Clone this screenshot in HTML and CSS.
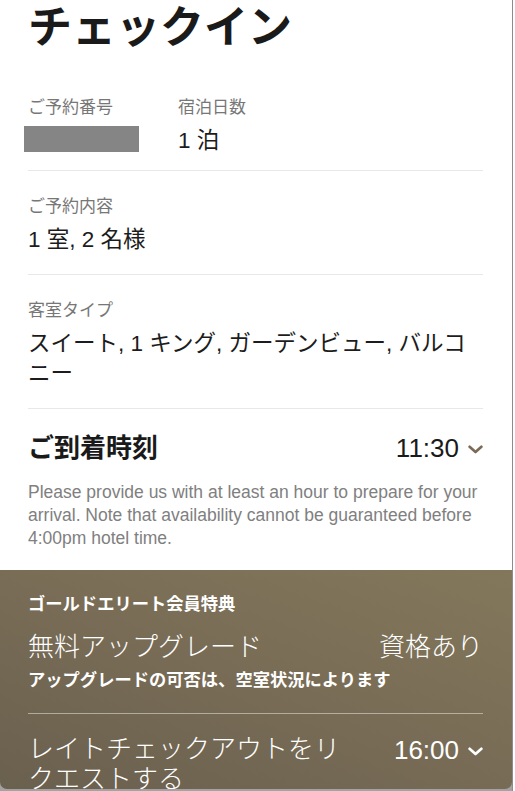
FILE: index.html
```html
<!DOCTYPE html>
<html lang="ja">
<head>
    <meta charset="UTF-8">
    <meta name="viewport" content="width=device-width, initial-scale=1.0">
    <title>チェックイン</title>
    <link rel="stylesheet" href="styles.css">
</head>
<body>

<div class="app">
    <div class="scroll-thumb"></div>

    <div class="sheet">
        <h1 class="page-title">チェックイン</h1>

        <section class="info first">
            <div class="info-col">
                <div class="label">ご予約番号</div>
                <div class="value"><span class="redacted"></span></div>
            </div>
            <div class="info-col">
                <div class="label">宿泊日数</div>
                <div class="value">1 泊</div>
            </div>
        </section>

        <section class="info">
            <div class="label">ご予約内容</div>
            <div class="value">1 室, 2 名様</div>
        </section>

        <section class="info">
            <div class="label">客室タイプ</div>
            <div class="value">スイート, 1 キング, ガーデンビュー, バルコニー</div>
        </section>

        <section class="arrival">
            <div class="arrival-row">
                <h2>ご到着時刻</h2>
                <button class="time-select">11:30
                    <svg width="15" height="9" viewBox="0 0 15 9"><path d="M1.6 1.8 L7.5 7 L13.4 1.8" fill="none" stroke="currentColor" stroke-width="2.7" stroke-linecap="round" stroke-linejoin="round"/></svg>
                </button>
            </div>
            <p class="note">Please provide us with at least an hour to prepare for your arrival. Note that availability cannot be guaranteed before 4:00pm hotel time.</p>
        </section>
    </div>

    <div class="elite">
        <div class="elite-title">ゴールドエリート会員特典</div>
        <div class="elite-row">
            <span>無料アップグレード</span>
            <span>資格あり</span>
        </div>
        <div class="elite-sub">アップグレードの可否は、空室状況によります</div>
        <div class="elite-divider"></div>
        <div class="elite-row late">
            <span class="late-label">レイトチェックアウトをリクエストする</span>
            <button class="time-select light">16:00
                <svg width="15" height="9" viewBox="0 0 15 9"><path d="M1.6 1.8 L7.5 7 L13.4 1.8" fill="none" stroke="currentColor" stroke-width="2.7" stroke-linecap="round" stroke-linejoin="round"/></svg>
            </button>
        </div>
    </div>
</div>

</body>
</html>
```

FILE: styles.css
```css
body {
    margin: 0;
    padding: 0;
    background: #fff;
    font-family: "Liberation Sans", "Noto Sans CJK JP", sans-serif;
    color: #1c1c1c;
}

.app {
    position: relative;
    width: 513px;
    height: 791px;
    overflow: hidden;
    background: #a3a3a3;
    border-right: 1px solid #8c8c8c;
    padding-bottom: 2px;
    box-sizing: border-box;
    display: flex;
    flex-direction: column;
}

/* scrollbar thumb on the right edge */
.scroll-thumb {
    position: absolute;
    top: 0;
    right: -1px;
    width: 1px;
    height: 148px;
    background: #1a1a1a;
}

.sheet {
    background: #fff;
    padding: 0 29px 20px 28px;
}

.page-title {
    margin: 0;
    padding-top: 2px;
    font-size: 44px;
    line-height: 52px;
    font-weight: bold;
    color: #1a1a1a;
}

.info {
    padding: 24px 0 19px;
    border-bottom: 1px solid #e8e8e8;
}

.info.first {
    display: flex;
    padding-top: 42px;
    padding-bottom: 14px;
}

.info-col:first-child {
    width: 150px;
}

.label {
    font-size: 17px;
    line-height: 24px;
    color: #777;
}

.value {
    margin-top: 6px;
    font-size: 22.5px;
    line-height: 30px;
    color: #1c1c1c;
}

.redacted {
    display: block;
    width: 115px;
    height: 26px;
    margin: 3px 0 0 -4px;
    background: #858585;
}

.arrival {
    padding-top: 22px;
}

.arrival-row {
    display: flex;
    justify-content: space-between;
    align-items: center;
}

.arrival-row h2 {
    margin: 0;
    font-size: 26px;
    line-height: 34px;
    font-weight: bold;
    color: #1a1a1a;
}

.time-select {
    display: flex;
    align-items: center;
    gap: 9px;
    padding: 0;
    border: none;
    background: none;
    font-family: inherit;
    font-size: 26px;
    line-height: 34px;
    color: #1a1a1a;
}

.time-select svg {
    color: #7b6a55;
    margin-top: 2px;
}

.time-select.light,
.time-select.light svg {
    color: #fff;
}

.note {
    margin: 16px 0 0;
    font-size: 17.5px;
    line-height: 23px;
    color: #808080;
}

.elite {
    flex: 1;
    min-height: 0;
    overflow: hidden;
    padding: 0 29px 0 28px;
    color: #fff;
    background: linear-gradient(200deg, #83775b 0%, #786c56 50%, #6a604e 100%);
    border-radius: 0 0 7px 7px;
}

.elite-title {
    padding-top: 22px;
    font-size: 17.3px;
    line-height: 24px;
    font-weight: bold;
}

.elite-row {
    display: flex;
    justify-content: space-between;
    align-items: flex-start;
    margin-top: 14px;
    font-size: 26px;
    line-height: 34px;
    font-weight: 300;
}

.elite-sub {
    margin-top: 4px;
    font-size: 17.3px;
    line-height: 24px;
    font-weight: bold;
}

.elite-divider {
    margin-top: 21px;
    height: 1px;
    background: rgba(255, 255, 255, 0.45);
}

.elite-row.late {
    margin-top: 20px;
    line-height: 30px;
}

.late-label {
    flex: 0 1 325px;
}

.late .time-select {
    line-height: 30px;
    margin-top: 1px;
}
```
